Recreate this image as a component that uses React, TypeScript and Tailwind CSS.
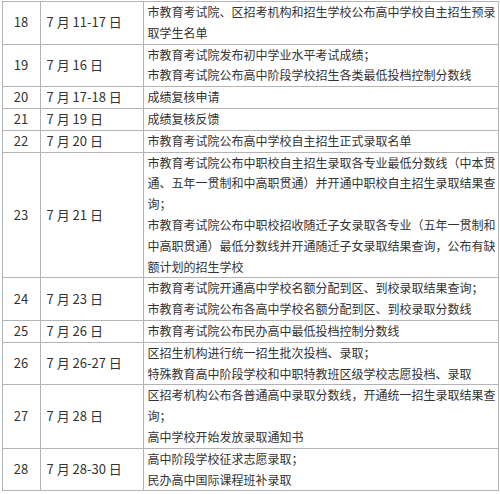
const rows: { no: string; date: string; lines: string[] }[] = [
  {
    no: "18",
    date: "7 月 11-17 日",
    lines: ["市教育考试院、区招考机构和招生学校公布高中学校自主招生预录取学生名单"],
  },
  {
    no: "19",
    date: "7 月 16 日",
    lines: ["市教育考试院发布初中学业水平考试成绩；", "市教育考试院公布高中阶段学校招生各类最低投档控制分数线"],
  },
  { no: "20", date: "7 月 17-18 日", lines: ["成绩复核申请"] },
  { no: "21", date: "7 月 19 日", lines: ["成绩复核反馈"] },
  { no: "22", date: "7 月 20 日", lines: ["市教育考试院公布高中学校自主招生正式录取名单"] },
  {
    no: "23",
    date: "7 月 21 日",
    lines: [
      "市教育考试院公布中职校自主招生录取各专业最低分数线（中本贯通、五年一贯制和中高职贯通）并开通中职校自主招生录取结果查询；",
      "市教育考试院公布中职校招收随迁子女录取各专业（五年一贯制和中高职贯通）最低分数线并开通随迁子女录取结果查询，公布有缺额计划的招生学校",
    ],
  },
  {
    no: "24",
    date: "7 月 23 日",
    lines: ["市教育考试院开通高中学校名额分配到区、到校录取结果查询；", "市教育考试院公布各高中学校名额分配到区、到校录取分数线"],
  },
  { no: "25", date: "7 月 26 日", lines: ["市教育考试院公布民办高中最低投档控制分数线"] },
  {
    no: "26",
    date: "7 月 26-27 日",
    lines: ["区招生机构进行统一招生批次投档、录取；", "特殊教育高中阶段学校和中职特教班区级学校志愿投档、录取"],
  },
  {
    no: "27",
    date: "7 月 28 日",
    lines: ["区招考机构公布各普通高中录取分数线，开通统一招生录取结果查询；", "高中学校开始发放录取通知书"],
  },
  {
    no: "28",
    date: "7 月 28-30 日",
    lines: ["高中阶段学校征求志愿录取；", "民办高中国际课程班补录取"],
  },
];

export default function App() {
  return (
    <div className="h-[494px] w-[500px] bg-white pl-[1.5px] pt-[1px]">
      <table
        className="w-[497px] table-fixed border-collapse text-[12px] leading-[20.8px] text-[#333333]"
        style={{ fontFamily: '"Noto Sans CJK SC", "Noto Sans", sans-serif' }}
      >
        <colgroup>
          <col className="w-[38px]" />
          <col className="w-[103px]" />
          <col />
        </colgroup>
        <tbody>
          {rows.map((r) => (
            <tr key={r.no}>
              <td className="border border-[#b4b4b4] p-0 text-center align-middle text-[13px]">{r.no}</td>
              <td className="border border-[#b4b4b4] py-0 pl-[6px] pr-0 align-middle text-[13px]">{r.date}</td>
              <td className="border border-[#b4b4b4] py-0 pl-[4px] pr-0 align-middle">
                {r.lines.map((l, i) => (
                  <p key={i}>{l}</p>
                ))}
              </td>
            </tr>
          ))}
        </tbody>
      </table>
    </div>
  );
}
